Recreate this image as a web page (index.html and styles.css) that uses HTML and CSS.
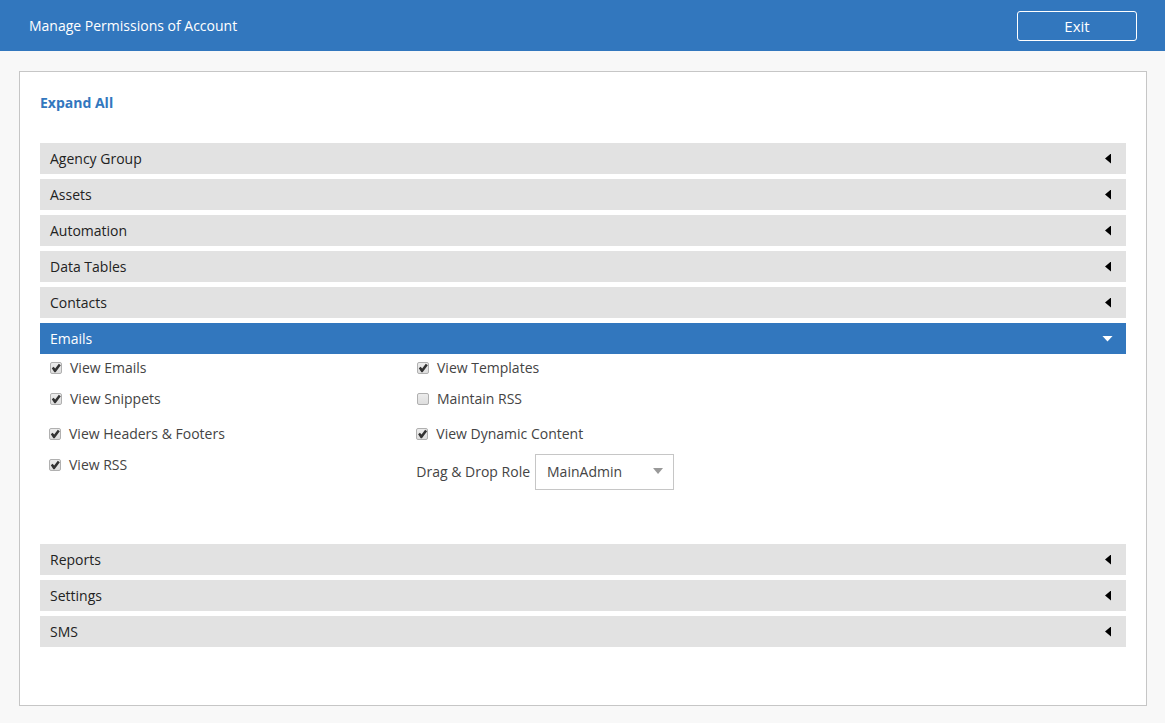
FILE: index.html
```html
<!DOCTYPE html>
<html lang="en">
<head>
    <meta charset="UTF-8">
    <meta name="viewport" content="width=device-width, initial-scale=1.0">
    <title>Manage Permissions of Account</title>
    <link rel="stylesheet" href="styles.css">
</head>
<body>
    <header class="top-bar">
        <h1>Manage Permissions of Account</h1>
        <button type="button" class="exit-btn">Exit</button>
    </header>

    <main class="panel">
        <a href="#" class="expand-all" id="expandAll">Expand All</a>

        <div class="sections">
            <button type="button" class="section-header">Agency Group</button>
            <button type="button" class="section-header">Assets</button>
            <button type="button" class="section-header">Automation</button>
            <button type="button" class="section-header">Data Tables</button>
            <button type="button" class="section-header">Contacts</button>

            <!-- Open section -->
            <div class="section">
                <button type="button" class="section-header open">Emails</button>
                <div class="section-body">
                    <div class="perm-group">
                        <label class="perm"><input type="checkbox" checked>View Emails</label>
                        <label class="perm"><input type="checkbox" checked>View Templates</label>
                        <label class="perm"><input type="checkbox" checked>View Snippets</label>
                        <label class="perm"><input type="checkbox">Maintain RSS</label>
                    </div>
                    <div class="perm-group perm-group-extra">
                        <label class="perm"><input type="checkbox" checked>View Headers &amp; Footers</label>
                        <label class="perm"><input type="checkbox" checked>View Dynamic Content</label>
                        <label class="perm"><input type="checkbox" checked>View RSS</label>
                        <div class="role">
                            <label for="role">Drag &amp; Drop Role</label>
                            <div class="select-wrap">
                                <select id="role">
                                    <option>MainAdmin</option>
                                </select>
                            </div>
                        </div>
                    </div>
                </div>
            </div>

            <button type="button" class="section-header">Reports</button>
            <button type="button" class="section-header">Settings</button>
            <button type="button" class="section-header">SMS</button>
        </div>
    </main>

    <script>
        const headers = document.querySelectorAll('.section-header');

        // Toggle one section
        headers.forEach(header => {
            header.addEventListener('click', () => header.classList.toggle('open'));
        });

        // Open every section
        document.getElementById('expandAll').addEventListener('click', e => {
            e.preventDefault();
            headers.forEach(header => header.classList.add('open'));
        });
    </script>
</body>
</html>
```
FILE: styles.css
```css
* {
    box-sizing: border-box;
}
body {
    margin: 0;
    background-color: #f8f8f8;
    color: #444;
    font-family: 'Open Sans', sans-serif;
    font-size: 14px;
    line-height: 20px;
}
button, select {
    font: inherit;
    color: inherit;
}

/* Top bar */
.top-bar {
    display: flex;
    justify-content: space-between;
    align-items: center;
    padding: 11px 28px 10px 29px;
    background-color: #3277be;
    color: #fff;
}
.top-bar h1 {
    margin: 0;
    font-size: 14px;
    font-weight: 400;
}
.exit-btn {
    width: 120px;
    height: 30px;
    padding: 0;
    border: 1px solid #fff;
    border-radius: 3px;
    background: none;
    font-size: 15px;
    cursor: pointer;
}

/* Panel */
.panel {
    margin: 20px 18px 17px 19px;
    padding: 20px 20px 58px;
    border: 1px solid #c6c6c6;
    background-color: #fff;
}
.expand-all {
    display: inline-block;
    margin-bottom: 29px;
    color: #3277be;
    font-weight: 700;
    line-height: 22px;
    text-decoration: none;
    vertical-align: top;
}
.sections {
    display: flex;
    flex-direction: column;
    gap: 5px;
}
.section-header {
    display: flex;
    justify-content: space-between;
    align-items: center;
    width: 100%;
    height: 31px;
    padding: 0 15px 0 10px;
    border: none;
    background-color: #e2e2e2;
    color: #222;
    text-align: left;
    cursor: pointer;
}
.section-header::after {
    content: "";
    width: 6px;
    height: 10px;
    background-color: #000;
    clip-path: polygon(100% 0, 100% 100%, 0 50%);
}
.section-header.open {
    padding-right: 13px;
    background-color: #3277be;
    color: #fff;
}
.section-header.open::after {
    width: 11px;
    height: 6px;
    background-color: #fff;
    clip-path: polygon(0 0, 100% 0, 50% 100%);
}
.section-header:not(.open) + .section-body {
    display: none;
}

/* Permissions */
.section-body {
    padding-bottom: 49px;
}
.perm-group {
    display: grid;
    grid-template-columns: repeat(3, 1fr);
    gap: 3px 25px;
    padding-left: 10px;
}
.perm-group > :nth-child(odd) {
    grid-column: 1;
}
.perm-group-extra {
    margin-top: 7px;
    padding-left: 9px;
}
.perm {
    display: flex;
    align-items: center;
    align-self: start;
    height: 28px;
}
.perm input {
    appearance: none;
    width: 12px;
    height: 12px;
    margin: 0 8px 0 0;
    border: 1px solid #b0b0b0;
    border-radius: 2px;
    background: linear-gradient(#ececec, #dedede);
}
.perm input:checked::before {
    content: "";
    display: block;
    width: 10px;
    height: 10px;
    background-color: #333;
    clip-path: polygon(8% 52%, 26% 38%, 42% 56%, 78% 8%, 98% 22%, 46% 92%, 34% 92%);
}
.role {
    display: flex;
    align-items: center;
    gap: 5px;
    padding-top: 3px;
    white-space: nowrap;
}
.select-wrap {
    position: relative;
}
.select-wrap::after {
    content: "";
    position: absolute;
    top: 14px;
    right: 11px;
    width: 10px;
    height: 6px;
    background-color: #999;
    clip-path: polygon(0 0, 100% 0, 50% 100%);
    pointer-events: none;
}
.select-wrap select {
    appearance: none;
    display: block;
    width: 139px;
    height: 36px;
    padding: 0 24px 0 11px;
    border: 1px solid #c6c6c6;
    border-radius: 0;
    background-color: #fff;
}
```
